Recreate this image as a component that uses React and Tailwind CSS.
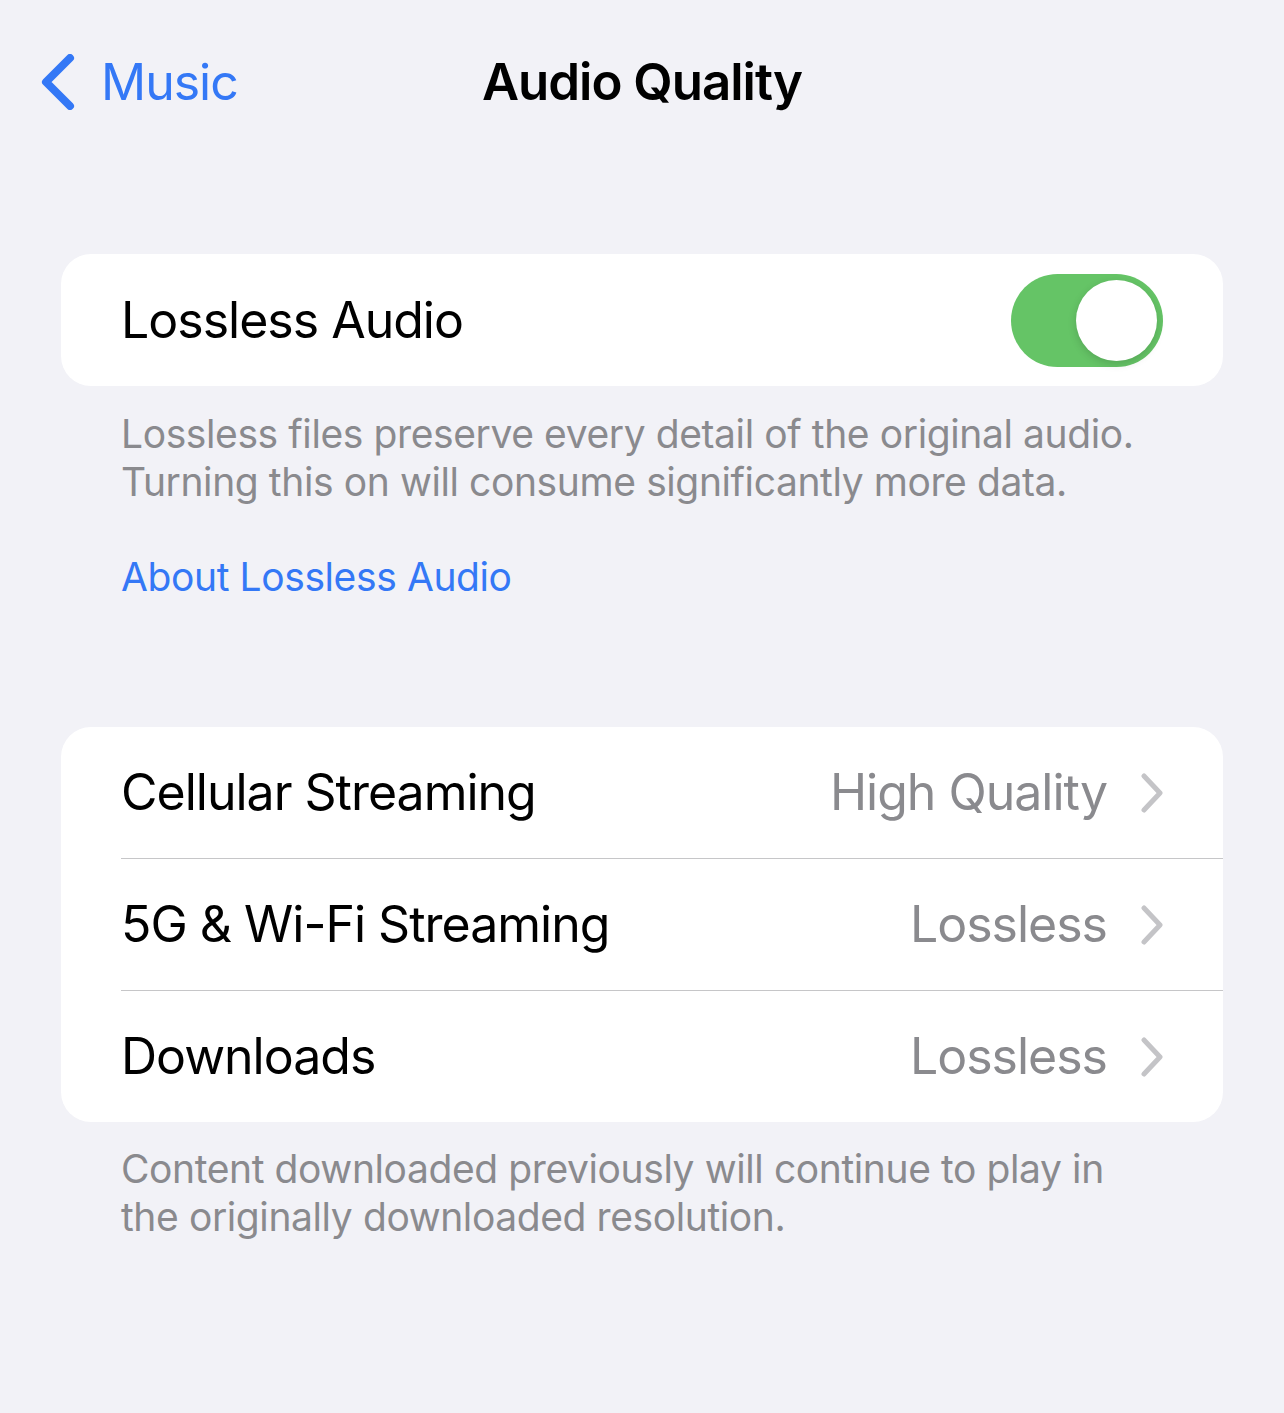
import React from "react";

function BackChevron() {
  return (
    <svg width="36" height="56" viewBox="0 0 36 56" fill="none">
      <path d="M30 4 L6 28 L30 52" stroke="#3478f6" strokeWidth="8" strokeLinecap="round" strokeLinejoin="round" />
    </svg>
  );
}

function RowChevron() {
  return (
    <svg width="22" height="40" viewBox="0 0 22 40" fill="none">
      <path d="M3 3 L19 20 L3 37" stroke="#c4c4c7" strokeWidth="5" strokeLinecap="round" strokeLinejoin="round" />
    </svg>
  );
}

function Toggle({ on }) {
  return (
    <div className={`w-[152px] h-[93px] rounded-full p-[6px] flex items-center ${on ? "bg-[#65c466] justify-end" : "bg-[#e9e9eb] justify-start"}`}>
      <div className="w-[81px] h-[81px] rounded-full bg-white shadow-[0_3px_8px_rgba(0,0,0,0.15)]" />
    </div>
  );
}

function NavRow({ label, value, last }) {
  return (
    <div className="flex flex-col pl-[60px]">
      <div className="h-[131px] flex items-center justify-between pr-[60px]">
        <span className="text-[50px] text-black tracking-[-1px]">{label}</span>
        <div className="flex items-center gap-[34px]">
          <span className="text-[50px] text-[#8a8a8e] tracking-[-1px]">{value}</span>
          <RowChevron />
        </div>
      </div>
      {!last && <div className="h-px bg-[#c6c6c8]" />}
    </div>
  );
}

export default function App() {
  return (
    <div className="w-[1284px] h-[1413px] bg-[#f2f2f7] font-['Inter',_'Noto_Sans',sans-serif] flex flex-col">
      {/* Nav bar */}
      <div className="h-[164px] px-[40px] grid grid-cols-[1fr_auto_1fr] items-center">
        <div className="flex items-center gap-[25px]">
          <BackChevron />
          <span className="text-[50px] text-[#3478f6] tracking-[-1px]">Music</span>
        </div>
        <h1 className="text-[51px] font-semibold text-black tracking-[-1px]">Audio Quality</h1>
        <div />
      </div>

      {/* Lossless section */}
      <div className="mt-[90px] mx-[61px] h-[132px] bg-white rounded-[30px] flex items-center justify-between pl-[60px] pr-[60px]">
        <span className="text-[50px] text-black tracking-[-1px]">Lossless Audio</span>
        <Toggle on />
      </div>
      <p className="mt-[24px] px-[121px] text-[39px] leading-[48px] text-[#8a8a8e] tracking-[-0.4px]">
        Lossless files preserve every detail of the original audio.
        <br />
        Turning this on will consume significantly more data.
      </p>
      <p className="mt-[47px] px-[121px] text-[39px] leading-[48px] text-[#3478f6] tracking-[-0.4px]">
        About Lossless Audio
      </p>

      {/* Streaming section */}
      <div className="mt-[126px] mx-[61px] bg-white rounded-[30px] flex flex-col">
        <NavRow label="Cellular Streaming" value="High Quality" />
        <NavRow label="5G & Wi-Fi Streaming" value="Lossless" />
        <NavRow label="Downloads" value="Lossless" last />
      </div>
      <p className="mt-[23px] px-[121px] text-[39px] leading-[48px] text-[#8a8a8e] tracking-[-0.4px]">
        Content downloaded previously will continue to play in
        <br />
        the originally downloaded resolution.
      </p>
    </div>
  );
}
